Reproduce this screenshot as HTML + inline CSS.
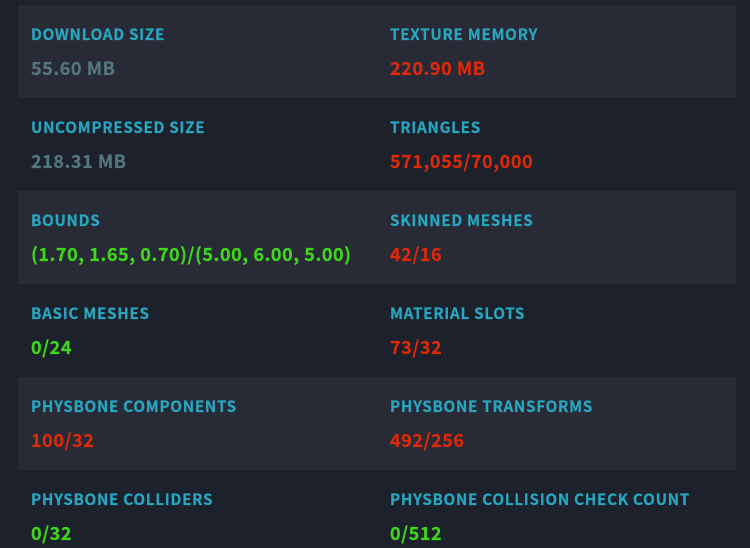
<!DOCTYPE html>
<html><head><meta charset="utf-8"><style>
html,body{margin:0;padding:0;width:750px;height:548px;overflow:hidden;background:#1c212b}
body{position:relative;font-family:"Noto Sans CJK JP","Liberation Sans",sans-serif;font-weight:700}
.r{position:absolute;left:18px;width:718px;height:93px;background:#282b36}
.l,.v{position:absolute;white-space:nowrap;filter:blur(.3px);-webkit-text-stroke:.2px currentColor}
.l{color:#28a7c2;font-size:15.2px;line-height:20px;letter-spacing:.72px}
.v{font-size:18px;line-height:24px;letter-spacing:.55px;margin-top:-.5px}
.g{color:#54767e}.red{color:#db2a0a}.gr{color:#3fd71c}
</style></head><body>
<div class="r" style="top:5px"></div><div class="r" style="top:191px"></div><div class="r" style="top:377px"></div>
<div class="l" style="left:31px;top:24px">DOWNLOAD SIZE</div><div class="v g" style="left:31px;top:56px">55.60 MB</div>
<div class="l" style="left:390px;top:24px">TEXTURE MEMORY</div><div class="v red" style="left:390px;top:56px">220.90 MB</div>
<div class="l" style="left:31px;top:117px">UNCOMPRESSED SIZE</div><div class="v g" style="left:31px;top:149px">218.31 MB</div>
<div class="l" style="left:390px;top:117px">TRIANGLES</div><div class="v red" style="left:390px;top:149px">571,055/70,000</div>
<div class="l" style="left:31px;top:210px">BOUNDS</div><div class="v gr" style="left:31px;top:242px">(1.70, 1.65, 0.70)/(5.00, 6.00, 5.00)</div>
<div class="l" style="left:390px;top:210px">SKINNED MESHES</div><div class="v red" style="left:390px;top:242px">42/16</div>
<div class="l" style="left:31px;top:303px">BASIC MESHES</div><div class="v gr" style="left:31px;top:335px">0/24</div>
<div class="l" style="left:390px;top:303px">MATERIAL SLOTS</div><div class="v red" style="left:390px;top:335px">73/32</div>
<div class="l" style="left:31px;top:396px">PHYSBONE COMPONENTS</div><div class="v red" style="left:31px;top:428px">100/32</div>
<div class="l" style="left:390px;top:396px">PHYSBONE TRANSFORMS</div><div class="v red" style="left:390px;top:428px">492/256</div>
<div class="l" style="left:31px;top:489px">PHYSBONE COLLIDERS</div><div class="v gr" style="left:31px;top:521px">0/32</div>
<div class="l" style="left:390px;top:489px">PHYSBONE COLLISION CHECK COUNT</div><div class="v gr" style="left:390px;top:521px">0/512</div>
</body></html>
